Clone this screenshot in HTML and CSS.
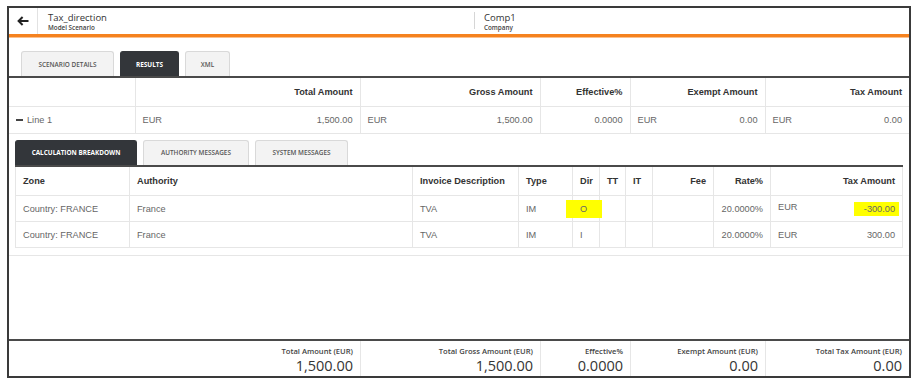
FILE: index.html
```html
<!DOCTYPE html>
<html lang="en">
<head>
    <meta charset="UTF-8">
    <meta name="viewport" content="width=device-width, initial-scale=1.0">
    <title>Tax_direction - Results</title>
    <link rel="stylesheet" href="styles.css">
</head>
<body>
    <div class="frame">
        <!-- Top bar with breadcrumbs -->
        <header class="topbar">
            <div class="back">
                <svg width="12" height="10" viewBox="0 0 12 10">
                    <path d="M11.5 5H2.2M5.6 1L1.6 5l4 4" fill="none" stroke="#222" stroke-width="2"/>
                </svg>
            </div>
            <div class="crumb crumb-main">
                <div class="crumb-title">Tax_direction</div>
                <div class="crumb-sub">Model Scenario</div>
            </div>
            <div class="crumb crumb-comp">
                <div class="crumb-title">Comp1</div>
                <div class="crumb-sub">Company</div>
            </div>
        </header>

        <nav class="tabs main-tabs">
            <div class="tab">Scenario Details</div>
            <div class="tab active">Results</div>
            <div class="tab">XML</div>
        </nav>

        <table class="results">
            <colgroup>
                <col style="width:126px">
                <col style="width:225px">
                <col style="width:180px">
                <col style="width:90px">
                <col style="width:135px">
                <col style="width:144px">
            </colgroup>
            <thead>
                <tr>
                    <th></th>
                    <th class="num">Total Amount</th>
                    <th class="num">Gross Amount</th>
                    <th class="num">Effective%</th>
                    <th class="num">Exempt Amount</th>
                    <th class="num">Tax Amount</th>
                </tr>
            </thead>
            <tbody>
                <tr>
                    <td><span class="collapse"></span>Line 1</td>
                    <td><div class="amt"><span>EUR</span><span>1,500.00</span></div></td>
                    <td><div class="amt"><span>EUR</span><span>1,500.00</span></div></td>
                    <td class="num">0.0000</td>
                    <td><div class="amt"><span>EUR</span><span>0.00</span></div></td>
                    <td><div class="amt"><span>EUR</span><span>0.00</span></div></td>
                </tr>
            </tbody>
        </table>

        <section class="breakdown">
            <nav class="tabs sub-tabs">
                <div class="tab active">Calculation Breakdown</div>
                <div class="tab">Authority Messages</div>
                <div class="tab">System Messages</div>
            </nav>

            <table class="calc">
                <colgroup>
                    <col style="width:114px">
                    <col style="width:283px">
                    <col style="width:106px">
                    <col style="width:54px">
                    <col style="width:27px">
                    <col style="width:26px">
                    <col style="width:27px">
                    <col style="width:61px">
                    <col style="width:57px">
                    <col style="width:132px">
                </colgroup>
                <thead>
                    <tr>
                        <th>Zone</th>
                        <th>Authority</th>
                        <th>Invoice Description</th>
                        <th>Type</th>
                        <th>Dir</th>
                        <th>TT</th>
                        <th>IT</th>
                        <th class="num">Fee</th>
                        <th class="num">Rate%</th>
                        <th class="num">Tax Amount</th>
                    </tr>
                </thead>
                <tbody>
                    <tr>
                        <td>Country: FRANCE</td>
                        <td>France</td>
                        <td>TVA</td>
                        <td>IM</td>
                        <td><span class="mark mark-dir">O</span></td>
                        <td></td>
                        <td></td>
                        <td></td>
                        <td class="num">20.0000%</td>
                        <td><div class="amt"><span>EUR</span><span class="mark mark-tax">-300.00</span></div></td>
                    </tr>
                    <tr>
                        <td>Country: FRANCE</td>
                        <td>France</td>
                        <td>TVA</td>
                        <td>IM</td>
                        <td>I</td>
                        <td></td>
                        <td></td>
                        <td></td>
                        <td class="num">20.0000%</td>
                        <td><div class="amt"><span>EUR</span><span>300.00</span></div></td>
                    </tr>
                </tbody>
            </table>
        </section>

        <div class="spacer"></div>

        <footer class="totals">
            <div class="total">
                <div class="total-label">Total Amount (EUR)</div>
                <div class="total-value">1,500.00</div>
            </div>
            <div class="total">
                <div class="total-label">Total Gross Amount (EUR)</div>
                <div class="total-value">1,500.00</div>
            </div>
            <div class="total">
                <div class="total-label">Effective%</div>
                <div class="total-value">0.0000</div>
            </div>
            <div class="total">
                <div class="total-label">Exempt Amount (EUR)</div>
                <div class="total-value">0.00</div>
            </div>
            <div class="total">
                <div class="total-label">Total Tax Amount (EUR)</div>
                <div class="total-value">0.00</div>
            </div>
        </footer>
    </div>
</body>
</html>
```

FILE: styles.css
```css
*, *::after, *::before {
    box-sizing: border-box;
}

body {
    margin: 0;
    background: #ffffff;
    font-family: 'Open Sans', sans-serif;
    color: #333;
}

.frame {
    margin: 6px 0 0 7px;
    width: 904px;
    height: 372px;
    border: 2px solid #3a3a3a;
    display: flex;
    flex-direction: column;
    background: #fff;
}

/* top bar */
.topbar {
    display: flex;
    height: 29px;
    border-bottom: 3px solid #f5821f;
    box-shadow: 0 1px 0 #fbc08e;
}

.back {
    width: 29px;
    display: flex;
    align-items: center;
    justify-content: center;
    border-right: 1px solid #e2e2e2;
}

.crumb {
    padding-top: 4px;
    line-height: 1;
}

.crumb-main {
    width: 436px;
    padding-left: 10px;
}

.crumb-comp {
    margin: 4px 0 5px;
    padding-top: 0;
    padding-left: 9px;
    border-left: 1px solid #d6d6d6;
}

.crumb-title {
    font-size: 9.5px;
    color: #333;
    line-height: 11px;
}

.crumb-sub {
    font-size: 6.3px;
    font-weight: 600;
    color: #444;
    line-height: 9px;
}

/* tabs */
.tabs {
    display: flex;
    gap: 6px;
    border-bottom: 2px solid #4a4a4a;
}

.main-tabs {
    padding: 14px 0 0 12px;
}

.sub-tabs {
    padding-top: 6px;
}

.tab {
    height: 25px;
    padding: 0 14px;
    display: flex;
    align-items: center;
    justify-content: center;
    border: 1px solid #d9d9d9;
    border-bottom: none;
    border-radius: 3px 3px 0 0;
    background: #f3f3f3;
    font-size: 6.4px;
    font-weight: 600;
    text-transform: uppercase;
    color: #555;
}

.main-tabs .tab:nth-child(1) { width: 93px; }
.main-tabs .tab:nth-child(2) { width: 59px; }
.main-tabs .tab:nth-child(3) { width: 45px; }

.sub-tabs .tab:nth-child(1) { width: 122px; }
.sub-tabs .tab:nth-child(2) { width: 106px; }
.sub-tabs .tab:nth-child(3) { width: 93px; }

.tab.active {
    background: #33363a;
    border-color: #33363a;
    color: #fff;
    font-weight: 700;
}

/* tables */
table {
    border-collapse: collapse;
    table-layout: fixed;
    font-family: 'Liberation Sans', Arial, sans-serif;
    font-size: 9.2px;
    color: #666;
}

th, td {
    padding: 0 7px;
    text-align: left;
    white-space: nowrap;
    vertical-align: middle;
}

th {
    font-weight: 700;
    color: #333;
}

.num {
    text-align: right;
}

.amt {
    display: flex;
    justify-content: space-between;
}

.results {
    width: 900px;
}

.results thead tr { height: 28px; }
.results tbody tr { height: 27px; }

.results th, .results td {
    border-left: 1px solid #e6e6e6;
    border-bottom: 1px solid #e6e6e6;
}

.results th:first-child, .results td:first-child {
    border-left: none;
}

.collapse {
    display: inline-block;
    width: 7px;
    height: 2px;
    background: #444;
    vertical-align: middle;
    margin: -1px 4px 0 0;
}

.breakdown {
    padding: 0 6px 7px;
    border-bottom: 1px solid #e6e6e6;
}

.calc {
    width: 887px;
    border: 1px solid #e6e6e6;
    border-top: none;
}

.calc thead tr { height: 29px; }
.calc tbody tr { height: 26px; }

.calc th, .calc td {
    border-left: 1px solid #e6e6e6;
    border-bottom: 1px solid #e6e6e6;
    overflow: visible;
}

.calc th:first-child, .calc td:first-child {
    border-left: none;
}

.mark {
    display: inline-block;
    background: #ffff00;
    position: relative;
}

.mark-dir {
    margin-left: -14px;
    padding: 4px 15px 4px 14px;
    z-index: 1;
}

.mark-tax {
    margin-right: -4px;
    padding: 2px 4px 2px 10px;
}

.spacer {
    flex: 1;
}

/* totals */
.totals {
    display: grid;
    grid-template-columns: 351px 180px 90px 135px 144px;
    height: 37px;
    border-top: 2px solid #4a4a4a;
}

.total {
    text-align: right;
    padding: 5px 7px 0 0;
    border-left: 1px solid #e6e6e6;
}

.total:first-child {
    border-left: none;
}

.total-label {
    font-size: 7.6px;
    font-weight: 600;
    color: #444;
    line-height: 11px;
}

.total-value {
    font-size: 14.5px;
    color: #333;
    line-height: 18px;
}
```
